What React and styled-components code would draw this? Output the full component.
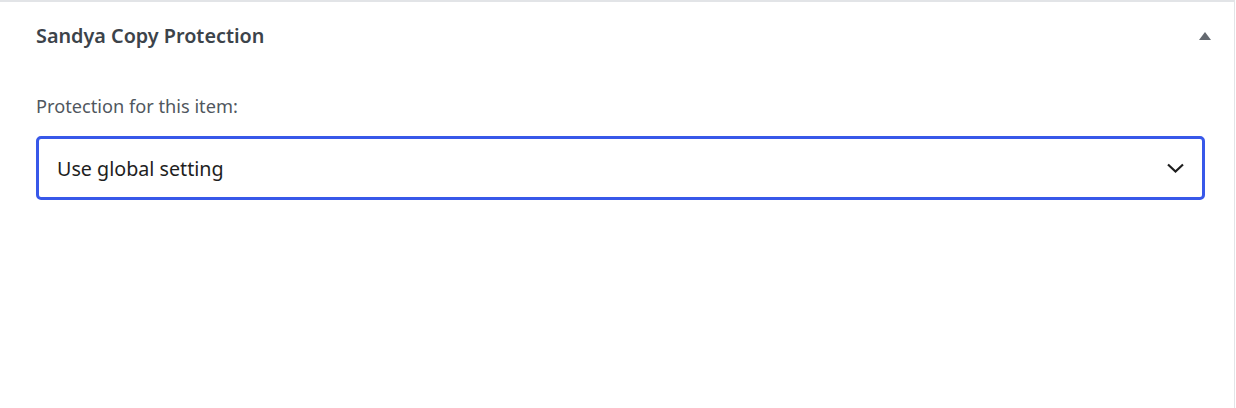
import React from 'react';
import styled, { createGlobalStyle } from 'styled-components';

const GlobalStyle = createGlobalStyle`
	html, body {
		margin: 0;
		padding: 0;
		background: #fff;
	}
	body {
		font-family: "Noto Sans", "Open Sans", sans-serif;
	}
`

const Postbox = styled.div`
	box-sizing: border-box;
	width: 1235px;
	height: 408px;
	background: #fff;
	border-top: 2px solid #e2e4e7;
	border-right: 1px solid #e2e4e7;
`

const Header = styled.div`
	display: flex;
	align-items: center;
	justify-content: space-between;
	height: 68px;
	padding: 0 23px 0 36px;
`

const Title = styled.h2`
	margin: 0;
	font-size: 19.8px;
	line-height: 26px;
	font-weight: 600;
	color: #3c434a;
`

const Toggle = styled.span`
	display: block;
	width: 0;
	height: 0;
	border-left: 6px solid transparent;
	border-right: 6px solid transparent;
	border-bottom: 8px solid #646970;
`

const Body = styled.div`
	padding: 24px 29px 0 36px;
`

const Label = styled.label`
	display: block;
	font-size: 18.2px;
	line-height: 24px;
	color: #50575e;
	margin-bottom: 18px;
`

const SelectBox = styled.div`
	box-sizing: border-box;
	display: flex;
	align-items: center;
	justify-content: space-between;
	height: 64px;
	padding: 0 17px 0 18px;
	border: 3px solid #3858e9;
	border-radius: 5px;
	font-size: 19.7px;
	color: #1e1e1e;
`

const Chevron = () => (
	<svg width="19" height="12" viewBox="0 0 19 12" fill="none">
		<path d="M2 2.5 L9.5 9.5 L17 2.5" stroke="#1e1e1e" strokeWidth="2.2" />
	</svg>
)

const App = () => (
	<>
		<GlobalStyle />
		<Postbox>
			<Header>
				<Title>Sandya Copy Protection</Title>
				<Toggle />
			</Header>
			<Body>
				<Label>Protection for this item:</Label>
				<SelectBox>
					<span>Use global setting</span>
					<Chevron />
				</SelectBox>
			</Body>
		</Postbox>
	</>
)

export default App
